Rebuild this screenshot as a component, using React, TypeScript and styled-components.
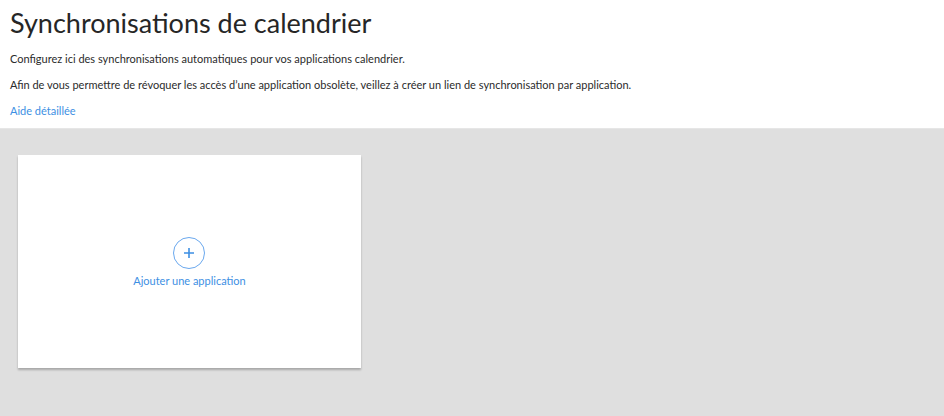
import styled, { createGlobalStyle } from 'styled-components'

const Global = createGlobalStyle`
html, body {
    margin: 0;
    padding: 0;
    background: #dfdfdf;
    font-family: Lato, "Open Sans", sans-serif;
    color: #2b2b2b;
}
`

const App = () => {
    return (
        <>
            <Global />
            <Header>
                <Title>Synchronisations de calendrier</Title>
                <Text>Configurez ici des synchronisations automatiques pour vos applications calendrier.</Text>
                <Text>Afin de vous permettre de révoquer les accès d’une application obsolète, veillez à créer un lien de synchronisation par application.</Text>
                <HelpLink href="#">Aide détaillée</HelpLink>
            </Header>
            <Content>
                <Card>
                    <AddButton>
                        <Circle>
                            <svg width="12" height="12" viewBox="0 0 12 12">
                                <path d="M6 1v10M1 6h10" stroke="#3d8fe3" strokeWidth="1.6" fill="none" />
                            </svg>
                        </Circle>
                        <AddLabel>Ajouter une application</AddLabel>
                    </AddButton>
                </Card>
            </Content>
        </>
    )
}

export default App

const Header = styled.div`
background: white;
padding: 5px 10px 9px;
border-bottom: 1px solid #e6e6e6;
`

const Title = styled.h1`
margin: 0 0 10px;
font-size: 27px;
font-weight: 400;
line-height: 36px;
color: #262626;
`

const Text = styled.p`
margin: 0 0 10px;
font-size: 11px;
line-height: 16px;
`

const HelpLink = styled.a`
display: block;
font-size: 11px;
line-height: 16px;
color: #3d8fe3;
text-decoration: none;
`

const Content = styled.div`
padding: 26px 18px;
`

const Card = styled.div`
width: 343px;
height: 213px;
background: white;
box-shadow: 0 2px 2px rgba(0, 0, 0, 0.25);
display: flex;
align-items: center;
justify-content: center;
`

const AddButton = styled.div`
display: flex;
flex-direction: column;
align-items: center;
gap: 5px;
cursor: pointer;
`

const Circle = styled.div`
width: 30px;
height: 30px;
border: 1px solid #6aa8ee;
border-radius: 50%;
display: flex;
align-items: center;
justify-content: center;
`

const AddLabel = styled.span`
font-size: 11px;
color: #3d8fe3;
`
